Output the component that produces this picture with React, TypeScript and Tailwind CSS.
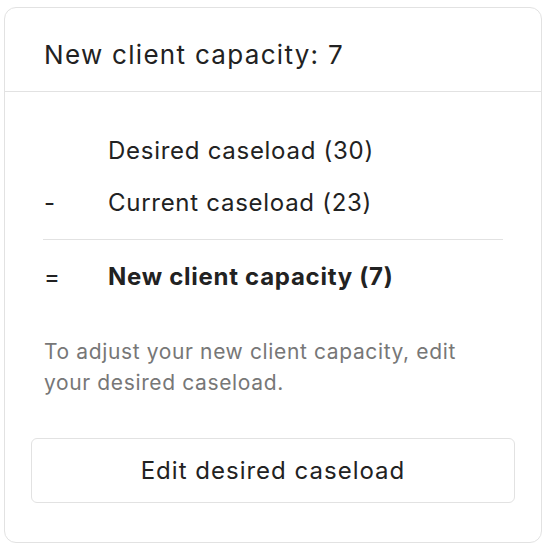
import React from "react";

export default function App() {
  return (
    <div className="w-[548px] h-[548px] bg-white pt-[7px] pl-[4px]" style={{ fontFamily: "Inter, 'Noto Sans', sans-serif" }}>
      <div className="w-[538px] h-[536px] border border-[#e2e2e2] rounded-[12px] flex flex-col">
        <div className="h-[84px] border-b border-[#e2e2e2] flex items-center pt-[10px] px-[39px]">
          <span className="text-[26px] tracking-[0.05em] text-[#222222] leading-none">New client capacity: 7</span>
        </div>
        <div className="px-[38px] pt-[46px] flex flex-col text-[24px] tracking-[0.03em] text-[#222222] leading-none">
          <div className="flex items-center h-[26px]">
            <span className="w-[65px] pl-[1px]"></span>
            <span>Desired caseload (30)</span>
          </div>
          <div className="flex items-center h-[26px] mt-[26px]">
            <span className="w-[65px] pl-[1px]">-</span>
            <span>Current caseload (23)</span>
          </div>
          <div className="h-px bg-[#e2e2e2] mt-[23px]"></div>
          <div className="flex items-center h-[26px] mt-[24px] font-bold">
            <span className="w-[65px] pl-[1px] font-normal">=</span>
            <span>New client capacity (7)</span>
          </div>
          <div className="mt-[46px] pl-[1px] text-[21px] tracking-[0.03em] leading-[31px] text-[#777777] w-[445px]">
            To adjust your new client capacity, edit your desired caseload.
          </div>
          <div className="mt-[40px] -ml-[12px] w-[484px] h-[65px] border border-[#e2e2e2] rounded-[6px] flex items-center justify-center tracking-[0.042em]">
            Edit desired caseload
          </div>
        </div>
      </div>
    </div>
  );
}
